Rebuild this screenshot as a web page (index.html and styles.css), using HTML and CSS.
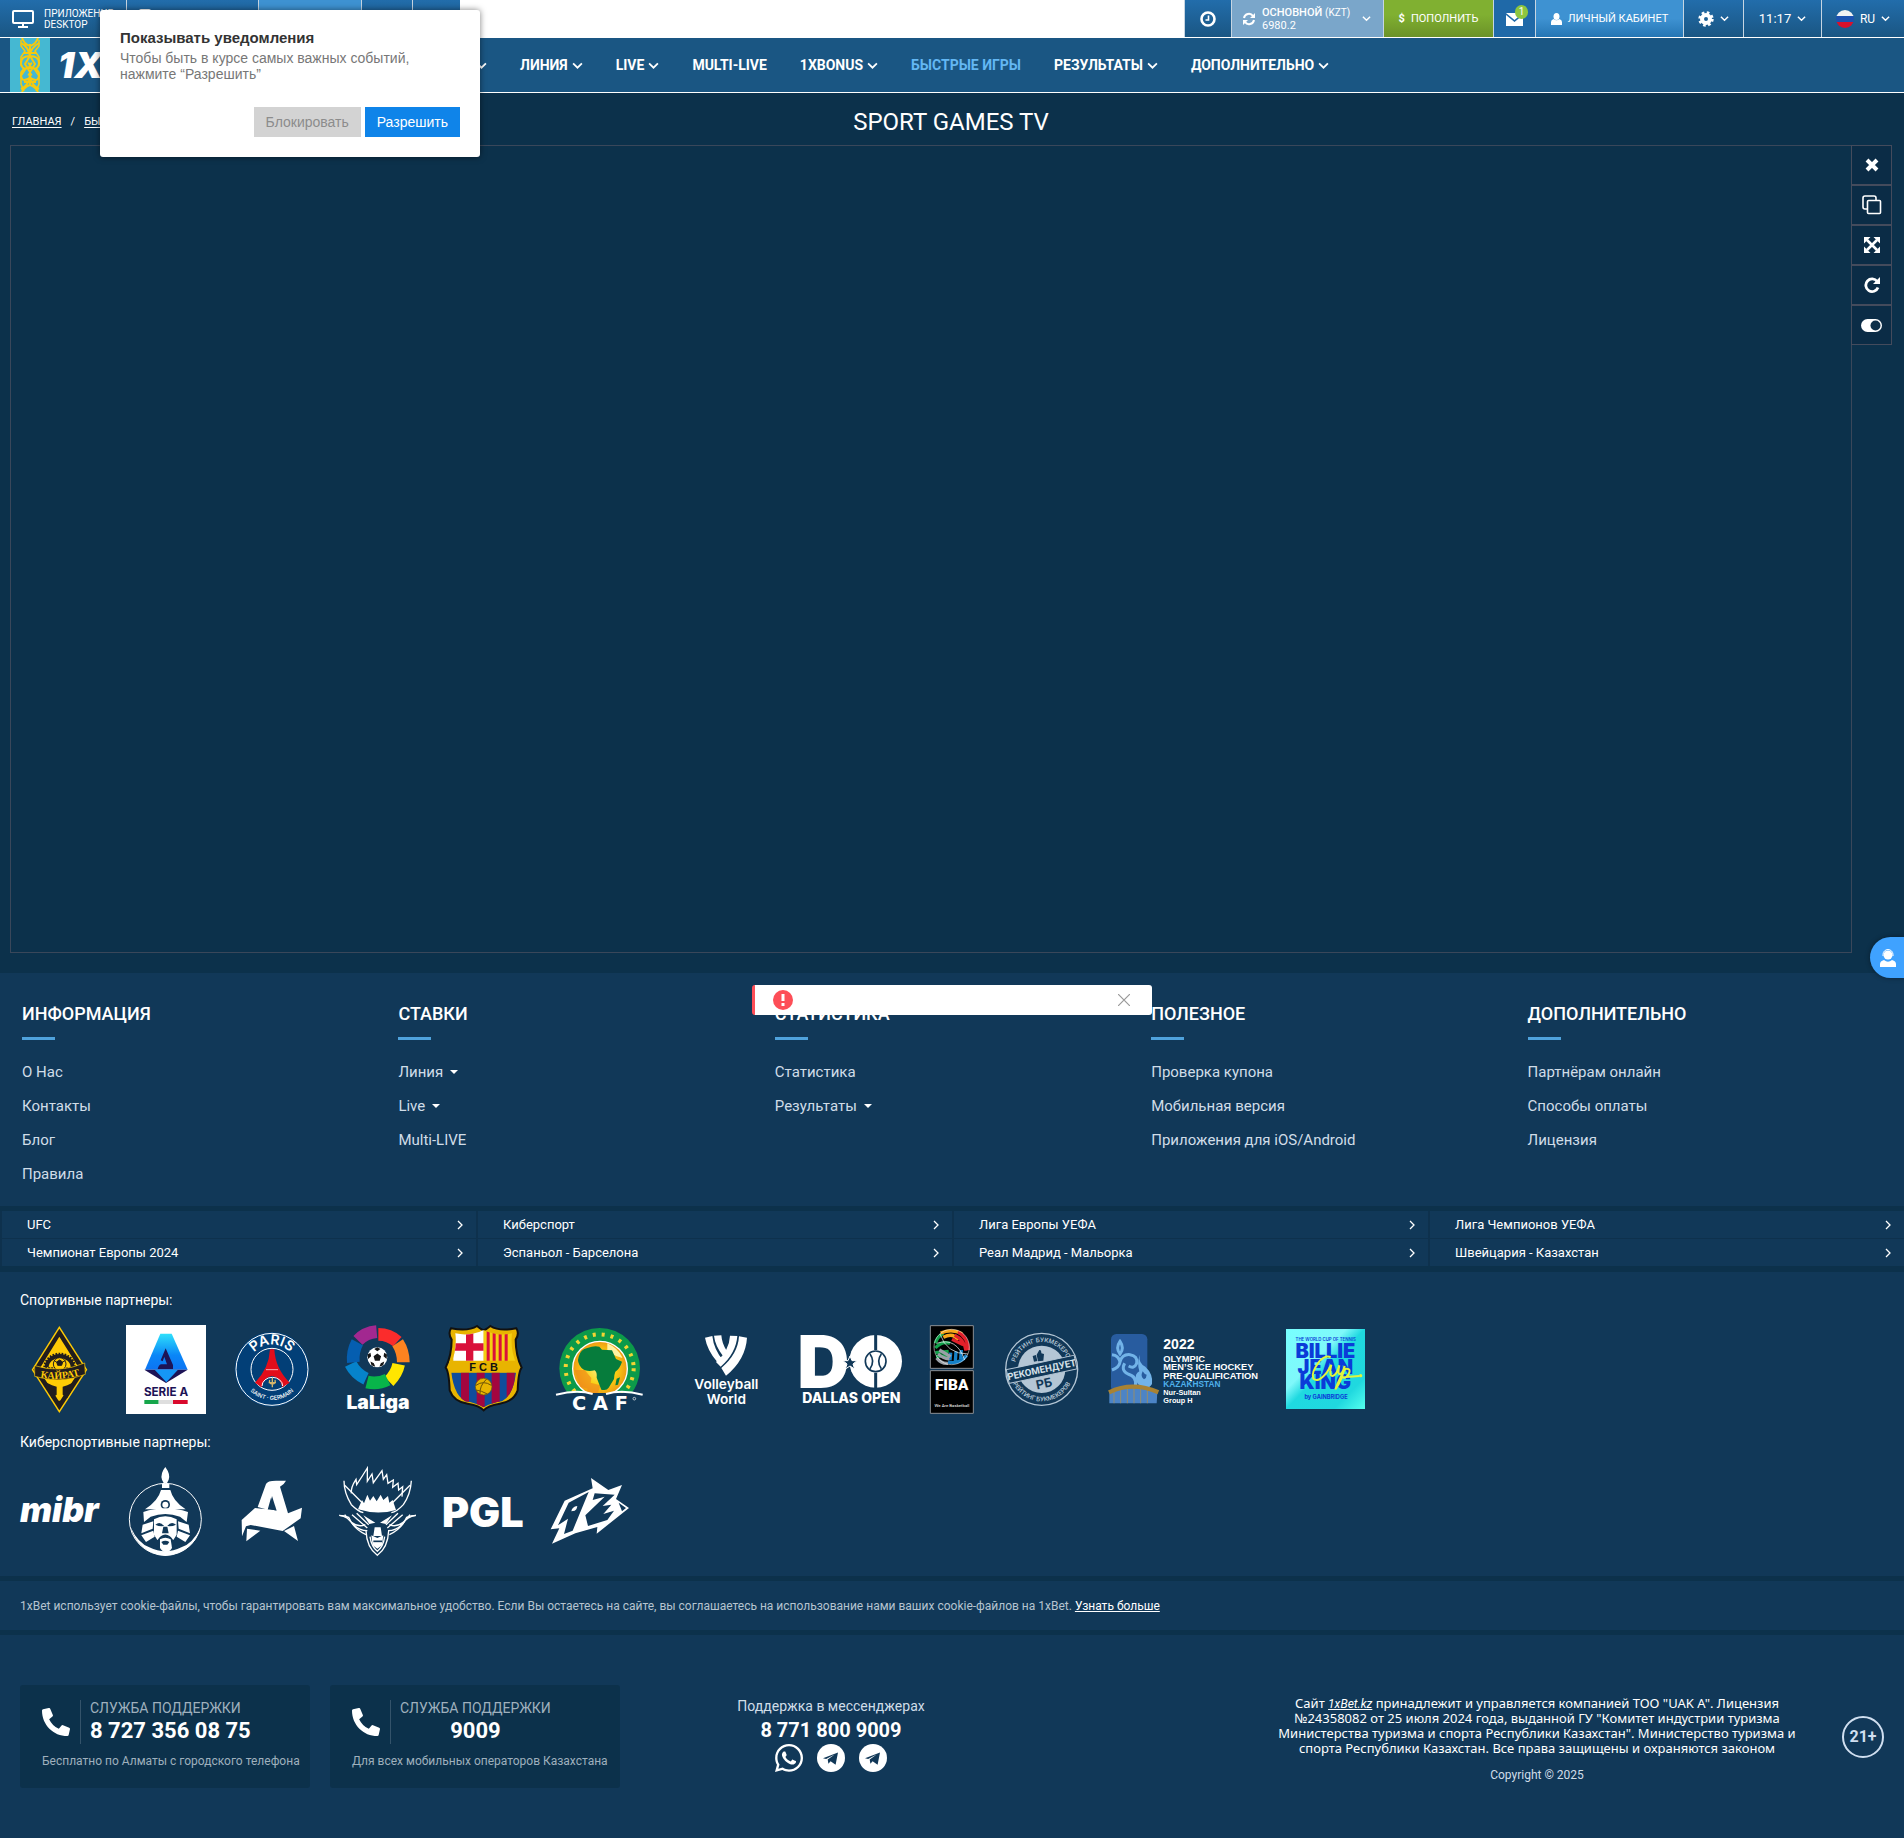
FILE: index.html
```html
<!DOCTYPE html>
<html lang="ru">
<head>
<meta charset="utf-8">
<meta name="viewport" content="width=device-width, initial-scale=1">
<title>Sport Games TV</title>
<link rel="stylesheet" href="styles.css">
</head>
<body>
<svg class="defs" aria-hidden="true">
  <symbol id="chev" viewBox="0 0 10 10"><path d="M1 3l4 4 4-4" fill="none" stroke="currentColor" stroke-width="1.6"/></symbol>
  <symbol id="next" viewBox="0 0 10 10"><path d="M3 1l4 4-4 4" fill="none" stroke="currentColor" stroke-width="1.3"/></symbol>
  <symbol id="phone" viewBox="0 0 512 512"><path fill="currentColor" d="M497.39 361.8l-112-48a24 24 0 0 0-28 6.9l-49.6 60.6A370.66 370.66 0 0 1 130.6 204.11l60.6-49.6a23.94 23.94 0 0 0 6.9-28l-48-112A24.16 24.16 0 0 0 122.6.61l-104 24A24 24 0 0 0 0 48c0 256.5 207.9 464 464 464a24 24 0 0 0 23.4-18.6l24-104a24.29 24.29 0 0 0-14.01-27.6z"/></symbol>
  <symbol id="telegram" viewBox="0 0 28 28"><circle cx="14" cy="14" r="14" fill="#fff"/><path d="M6 14.2L21 8.6l-2.4 12.2-5-3.6-2.2 2.6-.7-4.2 7-5-8.6 4.4z" fill="#113858"/></symbol>
  <symbol id="ball" viewBox="-30 -30 60 60"><circle r="29" fill="#fff"/><path d="M0-11L11-3 7 10H-7L-11-3zM0-29L9-24 0-18-9-24zM28-8L27 5 18-3 20-13zM17 23L6 27 10 17 20 12zM-17 23L-6 27-10 17-20 12zM-28-8L-27 5-18-3-20-13z" fill="#161616"/></symbol>
</svg>

<header class="header">
  <div class="topbar">
    <a class="tb tb-desktop" href="#">
      <svg width="22" height="18" viewBox="0 0 22 18" fill="none" stroke="#fff" stroke-width="2"><rect x="1" y="1" width="20" height="12" rx="1"/><path d="M11 13v4M6 17h10"/></svg>
      <span>ПРИЛОЖЕНИЕ<br>DESKTOP</span>
    </a>
    <a class="tb tb-mobile" href="#" aria-label="Мобильное приложение"><svg width="12" height="20" viewBox="0 0 12 20" fill="none" stroke="#fff" stroke-width="2"><rect x="1" y="1" width="10" height="18" rx="1"/></svg></a>
    <a class="tb tb-light tb-promo" href="#" aria-label="Акции"></a>
    <a class="tb tb-small" href="#" aria-label="Бонусы"></a>
    <a class="tb tb-small last" href="#" aria-label="Подарки"></a>
    <div class="spacer"></div>
    <button class="tb tb-clock" aria-label="История"><svg width="16" height="16" viewBox="0 0 16 16" fill="none" stroke="#fff"><circle cx="8" cy="8" r="6.5" stroke-width="2.6"/><path d="M8.5 4.5V9H5.5" stroke-width="1.6"/></svg></button>
    <button class="tb tb-balance">
      <svg width="14" height="14" viewBox="0 0 14 14" fill="none" stroke="#fff" stroke-width="2"><path d="M2 6a5 5 0 0 1 9-2M12 8a5 5 0 0 1-9 2"/><path d="M13 1v5H8zM1 13V8h5z" fill="#fff" stroke="none"/></svg>
      <span><b>ОСНОВНОЙ</b> <small>(KZT)</small><br>6980.2</span>
      <svg class="chev-s"><use href="#chev"/></svg>
    </button>
    <button class="tb tb-green"><b>$</b> ПОПОЛНИТЬ</button>
    <button class="tb tb-mail" aria-label="Сообщения"><svg width="17" height="14" viewBox="0 0 17 14"><path d="M0 1h17L8.5 8zM0 3l8.5 7L17 3v11H0z" fill="#fff"/></svg><span class="badge">1</span></button>
    <a class="tb tb-light tb-cabinet" href="#"><svg width="11" height="12" viewBox="0 0 11 12" fill="#fff"><ellipse cx="5.5" cy="3.5" rx="3" ry="3.5"/><path d="M0 12V9q0-2 2.5-3 3 2.4 6 0Q11 7 11 9v3z"/></svg>ЛИЧНЫЙ КАБИНЕТ</a>
    <button class="tb tb-settings" aria-label="Настройки"><svg width="16" height="16" viewBox="0 0 16 16" fill="none" stroke="#fff"><circle cx="8" cy="8" r="4" stroke-width="4"/><circle cx="8" cy="8" r="6.4" stroke-width="2.6" stroke-dasharray="2.6 2.427"/></svg><svg class="chev-s"><use href="#chev"/></svg></button>
    <button class="tb tb-time">11:17 <svg class="chev-s"><use href="#chev"/></svg></button>
    <button class="tb tb-lang"><svg width="18" height="18" viewBox="0 0 18 18"><clipPath id="rf"><circle cx="9" cy="9" r="9"/></clipPath><g clip-path="url(#rf)"><path fill="#f2f2f2" d="M0 0h18v6H0z"/><path fill="#1c52b0" d="M0 6h18v6H0z"/><path fill="#d8112b" d="M0 12h18v6H0z"/></g></svg>RU <svg class="chev-s"><use href="#chev"/></svg></button>
  </div>
  <nav class="nav">
    <a class="logo" href="#" aria-label="1XBET">
      <svg width="40" height="54" viewBox="0 0 40 54"><path fill="#45b8d2" d="M0 0h40v54H0z"/><g fill="none" stroke="#f6c90e" stroke-width="2"><path d="M12 0q2 6 8 8 6-2 8-8M11 5q8 4 9 14-1-8 9-14M20 6v14M14 15h12M20 18q-9 0-9 7t7 5q4-3 0-5M20 18q9 0 9 7t-7 5q-4-3 0-5M20 18l5 8-5 8-5-8zM20 30q-9 0-9 7t7 4q4-3 0-5M20 30q9 0 9 7t-7 4q-4-3 0-5M20 34v14M14 44h12M11 51q8-4 9-13 1 9 9 13M12 54q2-5 8-7 6 2 8 7"/><path d="M11 2v6l4 5-4 6v8l4 5-4 6v8l3 7M29 2v6l-4 5 4 6v8l-4 5 4 6v8l-3 7" stroke-width="1.5"/></g></svg>
      <span class="brand">1XBET</span>
    </a>
    <a class="nav-hidden" href="#" aria-label="Спорт"><svg class="chev"><use href="#chev"/></svg></a>
    <a href="#">ЛИНИЯ <svg class="chev"><use href="#chev"/></svg></a>
    <a href="#">LIVE <svg class="chev"><use href="#chev"/></svg></a>
    <a href="#">MULTI-LIVE</a>
    <a href="#">1XBONUS <svg class="chev"><use href="#chev"/></svg></a>
    <a class="active" href="#">БЫСТРЫЕ ИГРЫ</a>
    <a href="#">РЕЗУЛЬТАТЫ <svg class="chev"><use href="#chev"/></svg></a>
    <a href="#">ДОПОЛНИТЕЛЬНО <svg class="chev"><use href="#chev"/></svg></a>
  </nav>
</header>

<main class="main">
  <div class="heading">
    <div class="crumbs"><a href="#">ГЛАВНАЯ</a><span>/</span><a href="#">БЫСТРЫЕ ИГРЫ</a></div>
    <h1>SPORT GAMES TV</h1>
  </div>
  <div class="game">
    <div class="game-frame"></div>
    <div class="tools">
      <button aria-label="Закрыть"><svg width="14" height="14" viewBox="0 0 14 14"><path d="M2 2l10 10M12 2L2 12" stroke="#fff" stroke-width="4"/></svg></button>
      <button aria-label="Окна"><svg width="20" height="20" viewBox="0 0 20 20" fill="none" stroke="#fff" stroke-width="1.6"><path d="M5 14H3q-2 0-2-2V3q0-2 2-2h9q2 0 2 2v2"/><rect x="5.5" y="5.5" width="13" height="13" rx="1"/></svg></button>
      <button aria-label="На весь экран"><svg width="16" height="16" viewBox="0 0 16 16"><path d="M3 3l10 10M13 3L3 13" stroke="#fff" stroke-width="2.6"/><path d="M0 0h6.5L0 6.5zM16 0v6.5L9.500 0zM0 16V9.500L6.500 16zM16 16H9.500L16 9.500z" fill="#fff"/></svg></button>
      <button aria-label="Обновить"><svg width="16" height="16" viewBox="0 0 16 16"><path d="M13.200 4.500A6.300 6.300 0 1 0 14 10.500" fill="none" stroke="#fff" stroke-width="2.800"/><path d="M16 0v7H9z" fill="#fff"/></svg></button>
      <button aria-label="Переключить"><svg width="21" height="13" viewBox="0 0 21 13"><rect width="21" height="13" rx="6.500" fill="#fff"/><circle cx="14.500" cy="6.500" r="5" fill="#0c2f49"/></svg></button>
    </div>
  </div>
</main>

<footer class="footer">
  <div class="links">
    <section><h2>ИНФОРМАЦИЯ</h2><a href="#">О Нас</a><a href="#">Контакты</a><a href="#">Блог</a><a href="#">Правила</a></section>
    <section><h2>СТАВКИ</h2><a class="drop" href="#">Линия</a><a class="drop" href="#">Live</a><a href="#">Multi-LIVE</a></section>
    <section><h2>СТАТИСТИКА</h2><a href="#">Статистика</a><a class="drop" href="#">Результаты</a></section>
    <section><h2>ПОЛЕЗНОЕ</h2><a href="#">Проверка купона</a><a href="#">Мобильная версия</a><a href="#">Приложения для iOS/Android</a></section>
    <section><h2>ДОПОЛНИТЕЛЬНО</h2><a href="#">Партнёрам онлайн</a><a href="#">Способы оплаты</a><a href="#">Лицензия</a></section>
  </div>

  <div class="events">
    <a href="#">UFC<svg><use href="#next"/></svg></a>
    <a href="#">Киберспорт<svg><use href="#next"/></svg></a>
    <a href="#">Лига Европы УЕФА<svg><use href="#next"/></svg></a>
    <a href="#">Лига Чемпионов УЕФА<svg><use href="#next"/></svg></a>
    <a href="#">Чемпионат Европы 2024<svg><use href="#next"/></svg></a>
    <a href="#">Эспаньол - Барселона<svg><use href="#next"/></svg></a>
    <a href="#">Реал Мадрид - Мальорка<svg><use href="#next"/></svg></a>
    <a href="#">Швейцария - Казахстан<svg><use href="#next"/></svg></a>
  </div>

  <div class="partners">
    <h3>Спортивные партнеры:</h3>
    <div class="logos">
      <svg class="w80" viewBox="60 135 240 267" role="img" aria-label="Кайрат">
        <path d="M178 138L262 269 178 399 95 269z" fill="#ffcb05"/><path d="M178 146L257 269 178 391 100 269z" fill="#211d1e"/><path d="M178 170L218 234 240 269 178 366 117 269 140 232z" fill="#ffcb05"/>
        <path d="M134 262a45 40 0 0 1 90 0z" fill="#211d1e" stroke="#211d1e" stroke-width="8" stroke-dasharray="5 4"/><path d="M146 262a33 28 0 0 1 66 0z" fill="#ffcb05"/><circle cx="179" cy="252" r="19" fill="#ffcb05" stroke="#211d1e" stroke-width="3"/><path d="M170 246l9-6 9 6-3 10h-12zM162 242l8 4M196 242l-8 4" fill="#211d1e" stroke="#211d1e" stroke-width="3"/>
        <path d="M104 257q75 24 150-8l2 34q-76 30-152 6z" fill="#211d1e" stroke="#ffcb05" stroke-width="2"/>
        <path id="ka" d="M116 291q64 14 128-7" fill="none"/><text font-family="Liberation Serif,serif" font-weight="700" font-size="30" fill="#ffcb05" text-anchor="middle"><textPath href="#ka" startOffset="50%">КАЙРАТ</textPath></text>
        <path d="M128 302l28 52 14-10v-24l-14-4zM230 302l-28 52-14-10v-24l14-4zM172 362h14l-7 16z" fill="#211d1e"/>
      </svg>
      <svg class="w80" viewBox="378 135 240 267" role="img" aria-label="Serie A">
        <defs><linearGradient id="sa" x1="0" y1="0" x2="0" y2="1"><stop offset="0" stop-color="#2fe0fb"/><stop offset=".6" stop-color="#0a86f7"/><stop offset="1" stop-color="#0c74f3"/></linearGradient></defs>
        <path fill="#fff" d="M378 135h240v267H378z"/><path fill="url(#sa)" d="M481 161h34l48 108H435z"/><path fill="#1d1356" d="M433 269h130l-65 40z"/><path fill="#1596f6" d="M464 269h70l-35 38z"/><path fill="#1d1356" d="M497 205l22 50v12h-46q3-12 10-14h18l-8-22-5 13-6-3z"/>
        <text x="498" y="348" text-anchor="middle" font-family="Inter,sans-serif" font-weight="700" font-size="35" fill="#1d1356">SERIE A</text>
        <path fill="#16a64b" d="M433 360h43v12h-43z"/><path fill="#dedede" d="M476 360h43v12h-43z"/><path fill="#d9092c" d="M519 360h44v12h-44z"/>
      </svg>
      <svg class="w80" viewBox="696 135 240 267" role="img" aria-label="Paris Saint-Germain">
        <circle cx="816" cy="268" r="112" fill="#023f77"/><circle cx="816" cy="268" r="108" fill="none" stroke="#fff" stroke-width="3"/><circle cx="816" cy="268" r="63" fill="none" stroke="#fff" stroke-width="3"/>
        <path id="pa" d="M742 268a74 74 0 0 1 148 0" fill="none"/><text font-family="Inter,sans-serif" font-weight="600" font-size="42" fill="#fff" text-anchor="middle"><textPath href="#pa" startOffset="50%">PARIS</textPath></text>
        <path id="pg" d="M724 268a92 92 0 0 0 184 0" fill="none"/><text font-family="Inter,sans-serif" font-weight="500" font-size="17" fill="#fff" text-anchor="middle"><textPath href="#pg" startOffset="50%">SAINT · GERMAIN</textPath></text>
        <path fill="#e30d1b" d="M810 208h13q3 58 46 100l-22 14q-8-32-31-34-23 2-31 34l-20-14q42-42 45-100z"/><path d="M798 269h36" stroke="#fff" stroke-width="2"/><path d="M817 294v28M806 308h22M809 300q-3 12 8 12 11 0 8-12" fill="none" stroke="#d5b56a" stroke-width="4"/><path d="M786 318a31 26 0 0 1 62 0" fill="none" stroke="#fff" stroke-width="3"/>
      </svg>
      <svg class="w80" viewBox="1014 135 240 267" role="img" aria-label="LaLiga">
        <g fill="none" stroke-width="38"><path stroke="#a22890" d="M1074 181Q1096 158 1130 155"/><path stroke="#fb2c2c" d="M1135 163Q1168 163 1192 185"/><path stroke="#fe8320" d="M1193 188Q1210 214 1210 247"/><path stroke="#ffe600" d="M1196 253Q1190 282 1167 304"/><path stroke="#08b54a" d="M1163 299Q1132 314 1101 306"/><path stroke="#0683cb" d="M1098 296Q1067 282 1052 252"/><path stroke="#055eb0" d="M1060 247Q1057 215 1072 187"/></g>
        <use href="#ball" x="1101" y="201" width="62" height="62"/>
        <text x="1134" y="388" text-anchor="middle" font-family="Inter,sans-serif" font-weight="900" font-size="58" fill="#fff">LaLiga</text>
      </svg>
      <svg class="w80" viewBox="1332 135 240 267" role="img" aria-label="FC Barcelona">
        <defs><clipPath id="bs"><path d="M1366 160q44 10 85-10 41 20 85 10-6 50 14 92-4 90-44 112-30 4-55 18-25-14-55-18-40-22-44-112 20-42 14-92z"/></clipPath></defs>
        <path d="M1353 145q52 10 78-7 14 12 20 12 6 0 20-12 26 17 78 7 10 16-2 34 0 46 18 84-10 12-12 68-12 34-54 40-36 6-48 20-12-14-48-20-42-6-54-40-2-56-12-68 18-38 18-84-12-18-2-34z" fill="#e8b400" stroke="#111" stroke-width="6"/>
        <g clip-path="url(#bs)"><path fill="#fff" d="M1360 150h91v92h-91z"/><path fill="#d9103a" d="M1398 150h22v92h-22zM1360 190h91v22h-91z"/><path fill="#f4cf12" d="M1451 150h100v92h-100z"/><path fill="#d9103a" d="M1460 150h9v92h-9zM1478 150h9v92h-9zM1496 150h9v92h-9zM1514 150h9v92h-9z"/><path fill="#0f4d9c" d="M1340 278h220v120h-220z"/><path fill="#a3063f" d="M1383 278h24v120h-24zM1430 278h24v120h-24zM1475 278h24v120h-24zM1520 278h24v120h-24z"/></g>
        <path fill="#e8b400" d="M1348 243h206v34h-206z"/><text x="1451" y="273" text-anchor="middle" font-family="Liberation Sans,sans-serif" font-weight="700" font-size="33" fill="#111">F C B</text>
        <circle cx="1451" cy="320" r="25" fill="#e8b400" stroke="#6d5308" stroke-width="2"/><path d="M1428 316q22-16 46 0M1440 343q-2-26 20-46M1462 342q-18-10-34-12" fill="none" stroke="#6d5308" stroke-width="3"/>
      </svg>
      <svg class="w100" viewBox="150 75 300 267" role="img" aria-label="CAF">
        <defs><radialGradient id="cg"><stop offset="0" stop-color="#fdf08a"/><stop offset=".6" stop-color="#f9cf12"/><stop offset="1" stop-color="#ef9a14"/></radialGradient><clipPath id="cc"><path d="M150 75h300v204H150z"/></clipPath></defs>
        <g clip-path="url(#cc)"><circle cx="299" cy="205" r="121" fill="#0c9a4a"/><circle cx="299" cy="205" r="102" fill="none" stroke="#f3d433" stroke-width="12" stroke-dasharray="9 18"/><circle cx="300" cy="206" r="82" fill="url(#cg)" stroke="#fff" stroke-width="4"/><path fill="#f08b1c" opacity=".7" d="M224 210l30 0 20 24-4 34-30-8zM262 246l40 10-10 26h-30z"/><path fill="#fff2a0" d="M322 130q32 14 46 44l-20-6-26-16z"/>
        <path fill="#067c3c" d="M236 170q6-22 26-26 20-8 36-4l8 9 30 2 12 26 18 8q-6 20-20 30-4 10-4 22l-16 26q-6 10-22 6l-14-36q2-16-6-22-26 6-40-8-14-16-8-33z"/><path fill="#067c3c" d="M350 236l10-4-6 22-8 2z"/></g>
        <path d="M168 284q64-16 110-2M428 284q-62-16-110-2" fill="none" stroke="#fff" stroke-width="6"/>
        <text x="300" y="331" text-anchor="middle" font-family="DejaVu Sans,sans-serif" font-weight="700" font-size="58" fill="#fff">C A F</text><circle cx="403" cy="296" r="4" fill="none" stroke="#fff" stroke-width="2"/>
      </svg>
      <svg class="w100" viewBox="528 75 300 267" role="img" aria-label="Volleyball World">
        <path fill="#fff" d="M615 113l22-5q4 40 34 76l-19 2q-30-34-37-73zM642 107l22-1q2 26 16 46l-11 16q-24-32-27-61zM648 186q40-34 42-79l22 1q-4 52-50 92zM664 204q50-42 53-95l24 4q-4 66-63 114z"/>
        <g font-family="Inter,sans-serif" font-weight="600" font-size="41" fill="#fff" text-anchor="middle"><text x="679" y="268">Volleyball</text><text x="679" y="311">World</text></g>
      </svg>
      <svg class="w100" viewBox="906 75 300 267" role="img" aria-label="Dallas Open">
        <text x="892" y="263" font-family="Inter,sans-serif" font-weight="900" font-size="217" fill="#fff">D</text>
        <circle cx="1127" cy="184" r="79" fill="#fff"/><path d="M1127 104v46M1127 218v46" stroke="#113858" stroke-width="9"/><circle cx="1127" cy="184" r="31" fill="#fff" stroke="#113858" stroke-width="5"/><path d="M1110 162q16 22 0 44M1144 162q-16 22 0 44" fill="none" stroke="#113858" stroke-width="5"/>
        <path fill="#113858" stroke="#fff" stroke-width="3" d="M1050 168l6 14h15l-12 10 5 15-14-9-14 9 5-15-12-10h15z"/>
        <text x="1054" y="308" text-anchor="middle" font-family="Inter,sans-serif" font-weight="800" font-size="42" fill="#fff">DALLAS OPEN</text>
      </svg>
      <svg class="w48" viewBox="1284 75 144 267" role="img" aria-label="FIBA">
        <path fill="#000" stroke="#8b8f93" stroke-width="3" d="M1291 77h129v128h-129zM1291 212h129v128h-129z"/>
        <g fill="none" stroke-width="10"><path stroke="#12a24a" d="M1306 130q6-20 24-30M1306 144q20-22 44-14M1306 158l40-4M1308 170l36-4"/><path stroke="#f9a61a" d="M1322 99q34-14 64 2M1330 112q30-16 44 8"/><path stroke="#e3202a" d="M1374 96q30 16 31 54M1364 106q30 14 34 46M1356 118l34 16"/><path stroke="#1581c8" d="M1344 186q36 8 56-20M1350 180l2-22M1366 184l2-30M1382 178l2-28"/><path stroke="#9aa0a6" d="M1310 174q14 18 34 16M1314 162q20 16 34 14M1318 150l34 20"/></g><circle cx="1355" cy="141" r="53" fill="none" stroke="#fff" stroke-width="1.500"/><path d="M1320 102q20 60 84 60M1310 130q60-20 84 50" fill="none" stroke="#fff" stroke-width="2"/>
        <text x="1355" y="269" text-anchor="middle" font-family="Roboto,sans-serif" font-weight="900" font-size="46" fill="#fff">FIBA</text><text x="1356" y="320" text-anchor="middle" font-family="Roboto,sans-serif" font-size="13" fill="#fff">We Are Basketball</text>
      </svg>
      <svg class="w80" viewBox="126 75 240 267" role="img" aria-label="Рекомендует РБ">
        <circle cx="245" cy="208" r="108" fill="none" stroke="#b4c6d5" stroke-width="4"/><circle cx="245" cy="208" r="71" fill="#b4c6d5"/>
        <path id="rt" d="M163 208a82 82 0 0 1 164 0" fill="none"/><path id="rb" d="M149 208a96 96 0 0 0 192 0" fill="none"/>
        <g font-family="Roboto,sans-serif" font-weight="500" font-size="19" fill="#b4c6d5" text-anchor="middle"><text><textPath href="#rt" startOffset="50%">РЕЙТИНГ БУКМЕКЕРОВ</textPath></text><text><textPath href="#rb" startOffset="50%">РЕЙТИНГ БУКМЕКЕРОВ</textPath></text></g>
        <g transform="rotate(-12 245 208)"><path fill="#113858" stroke="#b4c6d5" stroke-width="3" d="M141 187h208v42H141z"/><text x="245" y="219" text-anchor="middle" font-family="Roboto,sans-serif" font-weight="700" font-size="29" fill="#d5e0e8">РЕКОМЕНДУЕТ</text><text x="243" y="264" text-anchor="middle" font-family="Roboto,sans-serif" font-weight="700" font-size="38" fill="#113858">РБ</text></g>
        <path fill="#113858" d="M218 168l10-3 4 18-10 2zM230 164l8-14q6-2 6 10l8 2-2 20-16 2z"/>
      </svg>
      <svg class="w152" viewBox="444 75 456 267" role="img" aria-label="2022 Olympic Men's Ice Hockey Pre-Qualification">
        <rect x="453" y="102" width="109" height="175" rx="16" fill="#285c9f"/>
        <g fill="none" stroke="#72b3e8" stroke-width="9"><path d="M480 124q-14 20 0 38 14-18 0-38zM456 164q20 2 24 22 6-24 30-22 24 4 20 26-8 18-24 8M456 210q22-8 24-24M494 190q-12 22 10 32 28 8 22 36"/></g><path fill="#72b3e8" d="M540 164q-6 24 16 36 24 22 20 52-10 16-26 10-20-6-22-24-4-16 10-24-8-26 2-50z"/><path fill="#285c9f" d="M548 214q-8 16 4 24 8-4 8-14-6 0-12-10z"/>
        <path fill="#4c84c6" d="M448 276q70-24 144 0l-2 34H448z"/><path stroke="#b99340" stroke-width="2" d="M462 272v38M482 266v44M502 264v46M522 264v46M542 265v45M562 268v42"/><path d="M447 277q70-34 148 0" fill="none" stroke="#a88233" stroke-width="13"/>
        <g font-family="Liberation Sans,sans-serif" font-weight="700" fill="#fff"><text x="610" y="147" font-size="42">2022</text><g font-size="28"><text x="610" y="187">OLYMPIC</text><text x="610" y="211">MEN’S ICE HOCKEY</text><text x="610" y="236">PRE-QUALIFICATION</text></g><text x="610" y="262" font-size="25" fill="#4fb0ea">KAZAKHSTAN</text><text x="610" y="285" font-size="22">Nur-Sultan</text><text x="610" y="310" font-size="22">Group H</text></g>
      </svg>
      <svg class="w80" viewBox="978 75 240 267" role="img" aria-label="Billie Jean King Cup">
        <defs><linearGradient id="bj" x1="0" y1="0" x2="1" y2="1"><stop offset="0" stop-color="#7ff"/><stop offset=".38" stop-color="#7ff8fa"/><stop offset=".5" stop-color="#1fd9e0"/><stop offset=".8" stop-color="#20d8df"/><stop offset="1" stop-color="#5fe"/></linearGradient></defs>
        <path fill="url(#bj)" d="M978 87h237v240H978z"/>
        <g fill="#0b3bd8" font-family="Inter,sans-serif" text-anchor="middle"><text x="1097" y="123" font-size="13" font-weight="600">THE WORLD CUP OF TENNIS</text><g font-size="60" font-weight="900"><text x="1096" y="174">BILLIE</text><text x="1096" y="221">JEAN</text><text x="1096" y="268">KING</text></g><text x="1098" y="297" font-size="17" font-weight="700">by GAINBRIDGE</text></g>
        <g fill="none" stroke="#e1f53c" stroke-width="6"><path d="M1112 172q-14-8-34 12-26 34-18 52 14 14 40-18l14-24q-8 34 4 34 12-2 20-32-6 28 2 26 8-2 14-24-6 40-28 70 24-62 34-62 14 0 6 16-8 14-18 10l50-4"/></g><circle cx="1202" cy="227" r="5" fill="#e1f53c"/>
      </svg>
    </div>
    <h3>Киберспортивные партнеры:</h3>
    <div class="logos">
      <svg class="w80" viewBox="60 561 240 267" role="img" aria-label="MIBR"><text x="60" y="725" font-family="Inter,sans-serif" font-style="italic" font-weight="900" font-size="102" fill="#fff">mibr</text></svg>
      <svg class="w80" viewBox="378 561 240 267" role="img" aria-label="The MongolZ">
        <circle cx="496" cy="718" r="108" fill="none" stroke="#fff" stroke-width="3"/><path fill="#fff" d="M392 742q22 78 104 86 84-8 106-86-24 50-58 60-24 12-48 12t-48-12q-34-12-56-60z"/>
        <path fill="#fff" d="M496 561q16 22 10 38l-6 12h-8l-6-12q-6-18 10-38zM486 612h22v12h-22zM483 630h28q8 34 46 58h-122q40-26 48-58z"/><circle cx="496" cy="674" r="14" fill="#113858"/><circle cx="496" cy="674" r="9" fill="#fff"/>
        <path fill="#fff" d="M430 696q66-22 134 0l-4 30-20-16q-44-16-88 0l-20 16zM428 734l32-10-2 22-34 14zM424 766l36-14 4 18-26 16zM566 734l-32-10 2 22 34 14zM570 766l-36-14-4 18 26 16z"/>
        <path fill="#fff" d="M462 718q34-18 68 0v46l-10 16-24-14-24 14-10-16z"/><path fill="#113858" d="M466 734q14-12 26 4-14 2-26-4zM528 734q-14-12-26 4 14 2 26-4zM490 740l-4 20h20l-4-20z"/><path d="M474 806q-4-36 22-40 26 4 22 40" fill="none" stroke="#113858" stroke-width="5"/><path fill="#fff" d="M480 778q16-10 32 0l4 26q-18 26-36 0z"/><path fill="#113858" d="M484 786q12-8 24 0l-6 8h-12z"/>
      </svg>
      <svg class="w80" viewBox="696 561 240 267" role="img" aria-label="Aurora"><path fill="#fff" d="M798 612q4-10 30-10h30q-6 12-18 18l24 80 42-17-4 32-54 38-96-18-14 4-12 30-1-49 40-36 62 7-14-38-10 36-30-8zM741 746l40 6-42 32zM882 738l12 45-42-30z"/><path fill="#113858" d="M816 648l14 44-22-6z"/></svg>
      <svg class="w80" viewBox="1014 561 240 267" role="img" aria-label="Дракон">
        <g fill="none" stroke="#fff" stroke-width="4"><path d="M1054 640q-2-18 14-42l2 16q16-24 32-50v40l14-22 4 26 26-36 4 26 10-14 4 26 16-10-2 22 16-12 2 20 12-10-2 30"/><path d="M1032 602q0 36 22 72 20 20 36 24M1234 602q-2 40-24 72-20 22-36 24M1034 616l66 66M1230 616l-66 66"/><path d="M1018 706q28 4 40 26 20 20 44 20M1248 706q-28 4-40 26-20 20-44 20M1034 704q30 44 62 30M1230 704q-30 44-62 30M1056 704l46 40M1208 704l-46 40"/><path d="M1018 706q16 0 28 6 14 34 52 52M1248 706q-16 0-28 6-14 34-52 52M1070 700l36 34M1194 700l-36 34"/><path d="M1098 752q2 50 34 74 32-24 34-74M1110 770q4 30 22 44 18-14 22-44"/></g>
        <path fill="#fff" d="M1074 688l12-28 6 10 10-26 8 18 10-14 10 16 12-20 8 16 14-12 4 20 10-8 10 30q-56 16-114-2zM1090 706l36 22-18 4zM1176 706l-36 22 18 4zM1124 742h18l4 26h-26zM1114 766l18 8 18-8-4 30-14 10-14-10z"/><path d="M1120 784h26" stroke="#113858" stroke-width="5"/>
      </svg>
      <svg class="w80" viewBox="1332 561 240 267" role="img" aria-label="PGL"><text x="1326" y="741" font-family="Inter,sans-serif" font-weight="900" font-size="124" fill="#fff">PGL</text></svg>
      <svg class="w80" viewBox="150 501 240 267" role="img" aria-label="9z">
        <path fill="#fff" fill-rule="evenodd" d="M273 534l52 36 41-15-18 42 39 27-97 77 2-20-66 19-70 31 22-46-26 3 42-86 84-37zM206 608l-32 68 30-20-12 46 26-10 38-92 10-24zM284 580l-6 20 36-10-58 56 8 32 58-18 20-28-32 10 24-28-26 4 36-34zM356 608l10 26 12-10z"/><path fill="#fff" d="M214 634q2-14 18-16-2 12-8 14z"/>
      </svg>
    </div>
  </div>

  <p class="cookies">1xBet использует cookie-файлы, чтобы гарантировать вам максимальное удобство. Если Вы остаетесь на сайте, вы соглашаетесь на использование нами ваших cookie-файлов на 1xBet. <a href="#">Узнать больше</a></p>

  <div class="bottom">
    <div class="cards">
      <div class="card"><div class="card-top"><svg class="i28"><use href="#phone"/></svg><div class="card-num"><span>СЛУЖБА ПОДДЕРЖКИ</span><b>8 727 356 08 75</b></div></div><p>Бесплатно по Алматы с городского телефона</p></div>
      <div class="card"><div class="card-top"><svg class="i28"><use href="#phone"/></svg><div class="card-num"><span>СЛУЖБА ПОДДЕРЖКИ</span><b>9009</b></div></div><p>Для всех мобильных операторов Казахстана</p></div>
    </div>
    <div class="messengers">
      <span>Поддержка в мессенджерах</span><b>8 771 800 9009</b>
      <div class="icons">
        <a href="#" aria-label="WhatsApp"><svg class="i28" viewBox="0 32 448 448"><path fill="#fff" d="M380.900 97.100C339 55.100 283.200 32 223.900 32c-122.400 0-222 99.600-222 222 0 39.100 10.200 77.300 29.600 111L0 480l117.700-30.900c32.400 17.700 68.900 27 106.100 27h.1c122.300 0 224.100-99.600 224.100-222 0-59.300-25.200-115-67.100-157zm-157 341.600c-33.200 0-65.700-8.900-94-25.700l-6.700-4-69.800 18.300L72 359.200l-4.400-7c-18.500-29.400-28.200-63.300-28.200-98.200 0-101.700 82.800-184.500 184.600-184.500 49.300 0 95.600 19.200 130.400 54.100 34.800 34.900 56.200 81.200 56.100 130.500 0 101.800-84.900 184.600-186.600 184.600zm101.200-138.200c-5.500-2.800-32.800-16.200-37.900-18-5.100-1.900-8.800-2.800-12.500 2.800-3.700 5.600-14.300 18-17.600 21.800-3.200 3.700-6.500 4.200-12 1.400-32.600-16.300-54-29.100-75.500-66-5.700-9.800 5.700-9.100 16.300-30.300 1.800-3.700.9-6.900-.5-9.700-1.400-2.800-12.500-30.100-17.100-41.200-4.500-10.800-9.100-9.300-12.500-9.500-3.200-.2-6.900-.2-10.600-.2-3.700 0-9.700 1.400-14.800 6.900-5.100 5.600-19.400 19-19.400 46.300 0 27.300 19.900 53.700 22.600 57.400 2.800 3.700 39.100 59.700 94.800 83.800 35.200 15.200 49 16.500 66.600 13.900 10.700-1.600 32.800-13.400 37.400-26.400 4.600-13 4.600-24.100 3.200-26.400-1.300-2.500-5-3.900-10.500-6.600z"/></svg></a>
        <a href="#" aria-label="Telegram"><svg class="i28"><use href="#telegram"/></svg></a>
        <a href="#" aria-label="Telegram"><svg class="i28"><use href="#telegram"/></svg></a>
      </div>
    </div>
    <div class="legal">
      <p>Сайт <a href="#">1xBet.kz</a> принадлежит и управляется компанией ТОО "UAK A". Лицензия №24358082 от 25 июля 2024 года, выданной ГУ "Комитет индустрии туризма Министерства туризма и спорта Республики Казахстан". Министерство туризма и спорта Республики Казахстан. Все права защищены и охраняются законом</p>
      <small>Copyright © 2025</small>
    </div>
    <div class="age">21+</div>
  </div>
</footer>

<div class="notify" role="dialog" aria-labelledby="nt">
  <h4 id="nt">Показывать уведомления</h4>
  <p>Чтобы быть в курсе самых важных событий, нажмите “Разрешить”</p>
  <div class="notify-actions"><button class="deny">Блокировать</button><button class="allow">Разрешить</button></div>
</div>

<div class="alert" role="alert">
  <svg width="20" height="20" viewBox="0 0 20 20"><circle cx="10" cy="10" r="10" fill="#fd4e57"/><path d="M10 4v7M10 13v3" stroke="#fff" stroke-width="3"/></svg>
  <button aria-label="Закрыть"><svg width="12" height="12" viewBox="0 0 12 12"><path d="M0 0l12 12M12 0L0 12" stroke="#999" stroke-width="1.200"/></svg></button>
</div>

<button class="support" aria-label="Поддержка"><svg width="16" height="18" viewBox="0 0 16 18" fill="#fff"><circle cx="8" cy="6" r="4.500"/><path d="M3 7V5.500a5 5 0 0 1 10 0V7" fill="none" stroke="#fff"/><path d="M0 18v-3q0-3 4-4 4 3.500 8 0 4 1 4 4v3z"/></svg></button>
</body>
</html>
```
FILE: styles.css
```css
* { box-sizing: border-box; }

body {
  position: relative;
  margin: 0;
  background: #0c314b;
  color: #fff;
  font-family: Roboto, "Liberation Sans", sans-serif;
  font-size: 14px;
}

h1, h2, h3, h4, p { margin: 0; font-weight: 400; }
a { color: inherit; text-decoration: none; }
button { border: 0; padding: 0; background: none; color: inherit; font: inherit; cursor: pointer; }
svg { display: block; flex: none; }
.defs { position: absolute; width: 0; height: 0; }

/* Top bar */
.topbar {
  display: flex;
  height: 38px;
  background: #fff;
  border-bottom: 1px solid #fff;
  font-size: 11px;
}
.tb {
  position: relative;
  display: flex;
  align-items: center;
  justify-content: center;
  gap: 6px;
  flex: none;
  color: #fff;
  background: linear-gradient(#226dab, #1a5683);
  border-right: 1px solid #c6d5e2;
  white-space: nowrap;
}
.tb.last, .tb-lang { border-right: 0; }
.tb-light { background: linear-gradient(#3e92d2 50%, #2576b4); }
.tb-desktop { width: 127px; justify-content: flex-start; gap: 10px; padding-left: 12px; line-height: 11px; font-size: 10px; }
.tb-mobile { width: 132px; justify-content: flex-start; padding-left: 12px; }
.tb-promo { width: 103px; }
.tb-small { width: 51px; }
.tb-small.last { width: 47px; }
.spacer { flex: 1; }
.tb-clock { width: 48px; border-left: 1px solid #c6d5e2; }
.tb-balance { width: 152px; justify-content: space-between; padding: 0 12px 0 10px; background: #7aa6ca; text-align: left; line-height: 13px; }
.tb-balance span { flex: 1; }
.tb-balance b { font-weight: 500; }
.tb-balance small { font-size: 10px; }
.tb-green { width: 110px; background: linear-gradient(#80b031 40%, #6b9228); }
.tb-mail { width: 42px; background: #1f69a8; }
.badge {
  position: absolute;
  top: 5px;
  right: 7px;
  width: 13px;
  height: 14px;
  border-radius: 7px;
  background: #8dc63f;
  font-size: 10px;
  line-height: 14px;
  text-align: center;
}
.tb-cabinet { width: 148px; }
.tb-settings { width: 60px; }
.tb-time { width: 78px; font-size: 13px; }
.tb-lang { width: 82px; font-size: 12px; }
.chev-s { width: 9px; height: 9px; }

/* Navigation */
.nav {
  display: flex;
  align-items: center;
  gap: 33px;
  height: 55px;
  padding-left: 10px;
  background: #1a5683;
  border-bottom: 1px solid #fff;
  font-weight: 700;
}
.nav a { display: flex; align-items: center; gap: 4px; }
.nav .logo { gap: 8px; width: 300px; }
.brand { font-family: Inter, sans-serif; font-style: italic; font-weight: 900; font-size: 36px; }
.nav .nav-hidden { width: 144px; justify-content: flex-end; }
.nav .active { color: #63b7f3; }
.chev { width: 11px; height: 11px; }

/* Game */
.main { padding: 0 12px 20px 10px; }
.heading {
  display: grid;
  grid-template-columns: 1fr auto 1fr;
  align-items: center;
  height: 52px;
  padding-top: 5px;
}
.heading h1 { font-size: 24px; line-height: 28px; }
.crumbs { display: flex; gap: 9px; padding-left: 2px; font-size: 11px; }
.crumbs a { text-decoration: underline; text-underline-offset: 2px; }
.game { display: flex; align-items: flex-start; }
.game-frame { flex: 1; min-height: 808px; border: 1px solid #3a475a; }
.tools { display: flex; flex-direction: column; width: 41px; margin-left: -1px; }
.tools button {
  display: flex;
  align-items: center;
  justify-content: center;
  height: 40px;
  background: #0b2c46;
  border: 1px solid #444b5c;
}

/* Footer links */
.footer { background: #113858; }
.links {
  display: grid;
  grid-template-columns: repeat(5, 1fr);
  padding: 29px 0 14px 22px;
  border-bottom: 5px solid #0c314b;
}
.links section { display: flex; flex-direction: column; align-items: flex-start; min-height: 190px; }
.links h2 { margin-bottom: 15px; font-size: 18px; font-weight: 500; line-height: 24px; }
.links h2::after { content: ""; display: block; width: 33px; height: 3px; margin-top: 11px; background: #4fa2dc; }
.links a { color: #d0dde8; font-size: 15px; line-height: 34px; }
.drop::after {
  content: "";
  display: inline-block;
  margin-left: 7px;
  vertical-align: 3px;
  border: 4px solid transparent;
  border-top-color: #fff;
  border-bottom: 0;
}

.events {
  display: grid;
  grid-template-columns: repeat(4, 1fr);
  gap: 1px 2px;
  padding-left: 2px;
  background: #0e314d;
  border-bottom: 6px solid #0c314b;
}
.events a {
  display: flex;
  align-items: center;
  justify-content: space-between;
  height: 27px;
  padding: 0 11px 0 25px;
  background: #113858;
  font-size: 13px;
}
.events svg { width: 10px; height: 10px; }

/* Partners */
.partners { padding: 20px; border-bottom: 5px solid #0c314b; }
.partners h3 { margin-bottom: 16px; font-size: 14px; line-height: 17px; }
.logos { display: flex; gap: 26px; margin-bottom: 20px; }
.logos:last-child { margin-bottom: 0; }
.logos svg { height: 89px; overflow: visible; }
.w48 { width: 48px; }
.w80 { width: 80px; }
.w100 { width: 100px; }
.w152 { width: 152px; }

.cookies {
  padding: 17px 20px 16px;
  border-bottom: 5px solid #0c314b;
  color: #b5c4d0;
  font-size: 12px;
  line-height: 16px;
}
.cookies a { color: #fff; text-decoration: underline; }

/* Bottom */
.bottom { display: flex; align-items: center; padding: 50px 20px; }
.cards { display: flex; gap: 20px; }
.card { width: 290px; height: 103px; padding: 15px 0 0 22px; border-radius: 3px; background: #0c314b; color: #9fb0bd; white-space: nowrap; }
.card-top { display: flex; align-items: center; gap: 10px; color: #fff; }
.card-num { display: flex; flex-direction: column; height: 44px; padding-left: 9px; border-left: 1px solid #34536a; }
.card-num span { color: #9fb0bd; font-size: 14px; line-height: 16px; }
.card-num b { align-self: center; font-size: 22px; line-height: 30px; }
.card p { margin-top: 9px; font-size: 12px; line-height: 16px; }
.i28 { width: 28px; height: 28px; }
.messengers { display: flex; flex-direction: column; align-items: center; width: 422px; padding-bottom: 6px; color: #d0dde8; }
.messengers span { line-height: 20px; }
.messengers b { color: #fff; font-size: 20px; line-height: 28px; }
.icons { display: flex; gap: 14px; }
.legal { width: 540px; margin-left: auto; padding-top: 5px; text-align: center; }
.legal p { font: 13px/15px "Noto Sans", sans-serif; }
.legal a { font: italic 12px/12px Roboto, sans-serif; text-decoration: underline; }
.legal small { display: block; margin-top: 11px; color: #d0dde8; font-size: 12px; line-height: 16px; }
.age {
  width: 42px;
  height: 42px;
  margin-left: 35px;
  border: 2px solid #d0dff0;
  border-radius: 50%;
  color: #d0dff0;
  font-size: 16px;
  font-weight: 700;
  line-height: 38px;
  text-align: center;
}

/* Overlays */
.notify {
  position: absolute;
  top: 10px;
  left: 100px;
  width: 380px;
  padding: 18px 20px 20px;
  border-radius: 3px;
  background: #fff;
  box-shadow: 0 0 6px rgba(0, 0, 0, .5);
  color: #777;
  font-family: "Liberation Sans", Arial, sans-serif;
}
.notify h4 { color: #333; font-size: 15px; font-weight: 700; line-height: 20px; }
.notify p { margin: 2px 0 25px; line-height: 16px; }
.notify-actions { display: flex; justify-content: flex-end; gap: 4px; }
.notify-actions button { height: 30px; padding: 0 12px; font-size: 14px; }
.deny { background: #d3d3d3; color: #8c8c8c; }
.allow { background: #0f84e9; color: #fff; }

.alert {
  position: absolute;
  top: 985px;
  left: 50%;
  display: flex;
  align-items: center;
  justify-content: space-between;
  width: 400px;
  height: 30px;
  margin-left: -200px;
  padding: 0 22px 0 18px;
  border-left: 3px solid #fd4e57;
  border-radius: 3px;
  background: #fff;
}
.support {
  position: absolute;
  top: 937px;
  right: 0;
  display: flex;
  align-items: center;
  width: 34px;
  height: 41px;
  padding-left: 10px;
  border-radius: 21px 0 0 21px;
  background: #3fa2ff;
  box-shadow: 0 0 5px rgba(0, 0, 0, .4);
}
```
